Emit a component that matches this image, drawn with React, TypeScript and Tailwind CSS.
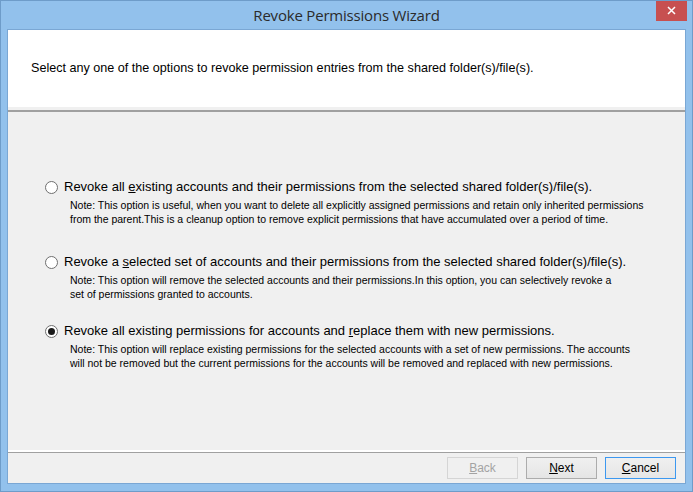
import React from "react";

function Radio({ checked }: { checked?: boolean }) {
  return (
    <div className="w-[13px] h-[13px] rounded-full border border-[#6f6f6f] bg-white flex items-center justify-center shrink-0">
      {checked && <div className="w-[7px] h-[7px] rounded-full bg-[#1a1a1a]" />}
    </div>
  );
}

function Option({
  checked,
  label,
  notes,
}: {
  checked?: boolean;
  label: React.ReactNode;
  notes: string[];
}) {
  return (
    <div className="flex flex-col">
      <div className="flex items-center h-[16px] pl-[37px]">
        <Radio checked={checked} />
        <div className="ml-[6px] text-[13px] text-black leading-[16px] font-['Liberation_Sans',Arial,sans-serif]">
          {label}
        </div>
      </div>
      <div className="pl-[62px] mt-[3px] text-[10.5px] leading-[14px] text-black font-['Liberation_Sans',Arial,sans-serif]">
        {notes.map((n, i) => (
          <div key={i}>{n}</div>
        ))}
      </div>
    </div>
  );
}

function Btn({
  children,
  variant,
}: {
  children: React.ReactNode;
  variant: "disabled" | "normal" | "focus";
}) {
  const cls =
    variant === "disabled"
      ? "border-[#d5d5d5] text-[#a3a3a3] bg-[#f0f0f0]"
      : variant === "focus"
      ? "border-[#3c98f0] text-black bg-gradient-to-b from-[#f0f0f0] to-[#e6e6e6]"
      : "border-[#acacac] text-black bg-gradient-to-b from-[#f0f0f0] to-[#e5e5e5]";
  return (
    <div
      className={`w-[71px] h-[22px] border flex items-center justify-center text-[12px] font-['Liberation_Sans',Arial,sans-serif] ${cls}`}
    >
      {children}
    </div>
  );
}

export default function App() {
  return (
    <div className="w-[693px] h-[492px] bg-[#92c1ec] border border-[#6e9cc9] flex flex-col overflow-hidden">
      {/* title bar */}
      <div className="h-[28px] flex items-start relative">
        <div className="flex-1 h-[28px] flex items-center justify-center text-[15px] text-[#2b2b2b] font-['Open_Sans','Noto_Sans',sans-serif] tracking-[-0.2px]">
          Revoke Permissions Wizard
        </div>
        <div className="absolute right-[5px] top-[-1px] w-[31px] h-[21px] bg-[#c75050] flex items-center justify-center">
          <svg width="9" height="9" viewBox="0 0 9 9">
            <path d="M1 1 L8 8 M8 1 L1 8" stroke="white" strokeWidth="1.5" />
          </svg>
        </div>
      </div>
      {/* content */}
      <div className="mx-[6px] border border-[#7aa7d4] h-[455px] bg-[#f0f0f0] flex flex-col">
        <div className="h-[77px] bg-white flex items-center pl-[23px] pb-[1px] text-[12.6px] text-black font-['Liberation_Sans',Arial,sans-serif]">
          Select any one of the options to revoke permission entries from the shared folder(s)/file(s).
        </div>
        <div className="h-[3px] bg-[#f0f0f0]" />
        <div className="h-[2px] bg-[#a0a0a0]" />
        <div className="flex-1 flex flex-col">
          <div className="h-[67px]" />
          <Option
            label={
              <>
                Revoke all <span className="underline">e</span>xisting accounts and their permissions from the selected shared folder(s)/file(s).
              </>
            }
            notes={[
              "Note: This option is useful, when you want to delete all explicitly assigned permissions and retain only inherited permissions",
              "from the parent.This is a cleanup option to remove explicit permissions that have accumulated over a period of time.",
            ]}
          />
          <div className="h-[28px]" />
          <Option
            label={
              <>
                Revoke a <span className="underline">s</span>elected set of accounts and their permissions from the selected shared folder(s)/file(s).
              </>
            }
            notes={[
              "Note: This option will remove the selected accounts and their permissions.In this option, you can selectively revoke a",
              "set of permissions granted to accounts.",
            ]}
          />
          <div className="h-[22px]" />
          <Option
            checked
            label={
              <>
                Revoke all existing permissions for accounts and <span className="underline">r</span>eplace them with new permissions.
              </>
            }
            notes={[
              "Note: This option will replace existing permissions for the selected accounts with a set of new permissions. The accounts",
              "will not be removed but the current permissions for the accounts will be removed and replaced with new permissions.",
            ]}
          />
          <div className="flex-1" />
          <div className="h-[2px] bg-white" />
          <div className="h-[1px] bg-[#a0a0a0]" />
          <div className="h-[30px] flex items-start justify-end gap-[8px] pr-[9px] pt-[4px]">
            <Btn variant="disabled">
              <span className="underline">B</span>ack
            </Btn>
            <Btn variant="normal">
              <span className="underline">N</span>ext
            </Btn>
            <Btn variant="focus">
              <span className="underline">C</span>ancel
            </Btn>
          </div>
        </div>
      </div>
    </div>
  );
}
